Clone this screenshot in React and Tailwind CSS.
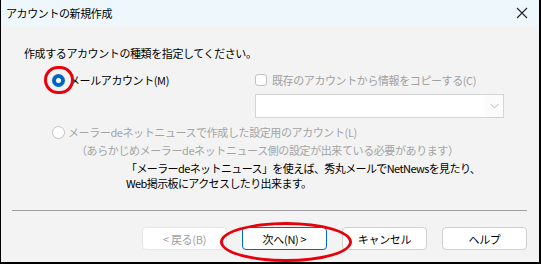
import React from 'react';

const font = { fontFamily: '"Noto Sans CJK JP", "Noto Sans", sans-serif' };

function Button({ children, primary, disabled }) {
  return (
    <div
      className={`w-[85px] h-[23px] flex items-center justify-center rounded-[4px] bg-white text-[11px] tracking-[-0.3px] ${
        primary ? 'border border-[#0067c0] text-black' : disabled ? 'border border-[#e6e6e6] text-[#a0a0a0]' : 'border border-[#d0d0d0] text-black'
      }`}
    >
      {children}
    </div>
  );
}

export default function App() {
  return (
    <div style={font} className="relative w-[541px] h-[264px] bg-[#f3f3f3] border-l border-r-2 border-b-2 border-black flex flex-col overflow-hidden text-black">
      {/* title bar */}
      <div className="h-[25px] bg-[#eef8fc] flex items-center justify-between pl-[5px] pr-[10px]">
        <span className="text-[11px] tracking-[-0.4px] leading-[14px]">アカウントの新規作成</span>
        <svg width="12" height="12" viewBox="0 0 12 12" className="mr-[1px]">
          <path d="M1 1 L11 11 M11 1 L1 11" stroke="#222" strokeWidth="1.1" />
        </svg>
      </div>

      {/* body */}
      <div className="flex-1 flex flex-col pl-[23px] pt-[21px] text-[11px] tracking-[-0.4px] leading-[14px]">
        <p>作成するアカウントの種類を指定してください。</p>

        <div className="flex mt-[13px]">
          <div className="w-[231px] flex items-start pl-[28px]">
            <div className="flex items-center h-[14px]">
              <span className="w-[13px] h-[13px] rounded-full bg-[#0067c0] flex items-center justify-center">
                <span className="w-[5px] h-[5px] rounded-full bg-white" />
              </span>
              <span className="ml-[4px]">メールアカウント(M)</span>
            </div>
          </div>
          <div className="flex flex-col">
            <div className="flex items-center h-[14px] text-[#a0a0a0]">
              <span className="w-[12px] h-[12px] rounded-[3px] border border-[#c2c2c2] bg-white" />
              <span className="ml-[5px]">既存のアカウントから情報をコピーする(C)</span>
            </div>
            <div className="mt-[7px] w-[249px] h-[24px] border border-[#d4d4d4] bg-[#fbfbfb] flex">
              <div className="w-[229px] h-full bg-white" />
              <div className="flex-1 flex items-center justify-center">
                <svg width="9" height="6" viewBox="0 0 9 6">
                  <path d="M0.5 1 L4.5 5 L8.5 1" stroke="#b8b8b8" strokeWidth="1" fill="none" />
                </svg>
              </div>
            </div>
          </div>
        </div>

        <div className="flex items-center h-[14px] mt-[7px] pl-[28px] text-[#a4a4a4]">
          <span className="w-[13px] h-[13px] rounded-full border border-[#c4c4c4] bg-white" />
          <span className="ml-[3px]">メーラーdeネットニュースで作成した設定用のアカウント(L)</span>
        </div>
        <p className="mt-[4px] pl-[52px] text-[#a4a4a4]">（あらかじめメーラーdeネットニュース側の設定が出来ている必要があります）</p>

        <div className="mt-[4px] pl-[102px] tracking-[-0.6px] leading-[15px]">
          <p>「メーラーdeネットニュース」を使えば、秀丸メールでNetNewsを見たり、</p>
          <p>Web掲示板にアクセスしたり出来ます。</p>
        </div>

        <div className="mt-[19px] -ml-[12px] mr-[12px] h-px bg-[#a0a0a0]" />

        <div className="flex justify-end gap-[15px] mt-[16px] mr-[12px]">
          <Button disabled>&lt; 戻る(B)</Button>
          <Button primary>次へ(N) &gt;</Button>
          <Button>キャンセル</Button>
          <Button>ヘルプ</Button>
        </div>
      </div>

      {/* red annotations */}
      <div className="absolute left-[43px] top-[66px] w-[30px] h-[28px] rounded-full border-[3px] border-[#e8000b] pointer-events-none" />
      <div className="absolute left-[219px] top-[222px] w-[132px] h-[40px] rounded-[50%] border-[3px] border-[#e8000b] pointer-events-none" />
    </div>
  );
}
